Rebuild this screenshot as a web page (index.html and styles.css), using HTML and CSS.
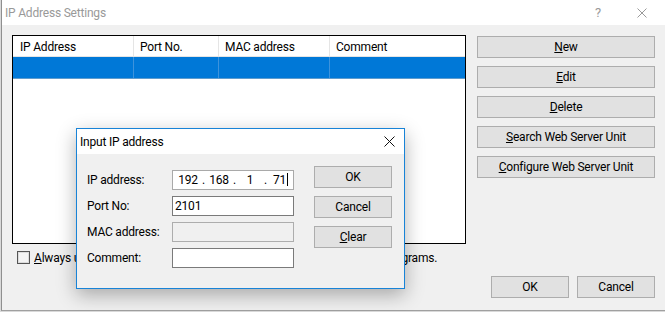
FILE: index.html
```html
<!DOCTYPE html>
<html lang="en">
<head>
    <meta charset="UTF-8">
    <meta name="viewport" content="width=device-width, initial-scale=1.0">
    <title>IP Address Settings</title>
    <link rel="stylesheet" href="styles.css">
</head>
<body>
    <div class="window">
        <div class="titlebar">
            <span class="title">IP Address Settings</span>
            <span class="help">?</span>
            <svg class="close" width="10" height="10" viewBox="0 0 10 10"><path d="M0.5 0.5 L9.5 9.5 M9.5 0.5 L0.5 9.5" stroke="#9a9a9a" stroke-width="1" fill="none"/></svg>
        </div>

        <div class="content">
            <div class="main">
                <div class="list">
                    <div class="list-row list-head">
                        <div class="col c1">IP Address</div>
                        <div class="col c2">Port No.</div>
                        <div class="col c3">MAC address</div>
                        <div class="col c4">Comment</div>
                    </div>
                    <div class="list-row selected">
                        <div class="col c1"></div>
                        <div class="col c2"></div>
                        <div class="col c3"></div>
                        <div class="col c4"></div>
                    </div>
                </div>
                <div class="side-buttons">
                    <button class="btn"><u>N</u>ew</button>
                    <button class="btn"><u>E</u>dit</button>
                    <button class="btn"><u>D</u>elete</button>
                    <button class="btn"><u>S</u>earch Web Server Unit</button>
                    <button class="btn"><u>C</u>onfigure Web Server Unit</button>
                </div>
            </div>

            <label class="check">
                <span class="check-box"></span>
                <span><u>A</u>lways use the selected IP address when connecting from the other programs.</span>
            </label>

            <div class="footer">
                <button class="btn wide">OK</button>
                <button class="btn wide">Cancel</button>
            </div>
        </div>

        <!-- modal on top of the settings window -->
        <div class="dialog">
            <div class="dialog-title">
                <span>Input IP address</span>
                <svg class="dialog-close" width="11" height="11" viewBox="0 0 11 11"><path d="M0.5 0.5 L10.5 10.5 M10.5 0.5 L0.5 10.5" stroke="#111" stroke-width="1" fill="none"/></svg>
            </div>
            <div class="dialog-body">
                <div class="form">
                    <span class="lbl">IP address:</span>
                    <div class="field ip">
                        <span class="oct">192</span><span class="dot">.</span>
                        <span class="oct">168</span><span class="dot">.</span>
                        <span class="oct">1</span><span class="dot">.</span>
                        <span class="oct last">71<span class="caret"></span></span>
                    </div>

                    <span class="lbl">Port No:</span>
                    <div class="field">2101</div>

                    <span class="lbl">MAC address:</span>
                    <div class="field disabled"></div>

                    <span class="lbl">Comment:</span>
                    <div class="field"></div>
                </div>
                <div class="dialog-buttons">
                    <button class="btn wide">OK</button>
                    <button class="btn wide">Cancel</button>
                    <button class="btn wide"><u>C</u>lear</button>
                </div>
            </div>
        </div>
    </div>
</body>
</html>
```

FILE: styles.css
```css
* {
    box-sizing: border-box;
}
body {
    margin: 0;
    background-color: #d9d9d9;
    font-family: Roboto, "Liberation Sans", Arial, sans-serif;
    font-size: 12px;
    letter-spacing: -0.2px;
    color: #000;
}
.window {
    position: relative;
    margin-left: 1px;
    width: 664px;
    height: 311px;
    border-left: 1px solid #8f8f8f;
    border-bottom: 1px solid #a0a0a0;
    background-color: #f0f0f0;
}
.titlebar {
    display: flex;
    align-items: center;
    height: 25px;
    padding-left: 3px;
    background: white;
    color: #999;
}
.title {
    flex: 1;
}
.help {
    font-size: 13px;
    color: #9a9a9a;
    margin-right: 36px;
}
.close {
    margin-right: 18px;
}
.content {
    padding: 10px 10px 0 10px;
}
.main {
    display: flex;
    gap: 11px;
}
.list {
    width: 454px;
    height: 209px;
    border: 1px solid #000;
    background: white;
}
.list-row {
    display: flex;
}
.list-head {
    height: 21px;
    border-bottom: 1px solid #e5e5e5;
}
.list-head .col {
    line-height: 20px;
    padding-top: 1px;
    border-right: 1px solid #e5e5e5;
}
.col {
    padding-left: 6px;
}
.c1 {
    width: 121px;
    padding-left: 7px;
}
.c2 {
    width: 85px;
}
.c3 {
    width: 111px;
}
.c4 {
    flex: 1;
}
.list-head .c4 {
    border-right: none;
}
.selected {
    height: 22px;
    background-color: #0078d7;
    border-bottom: 1px solid #5f9ccd;
}
.selected .col {
    border-right: 1px solid #3d93dc;
}
.selected .c4 {
    border-right: none;
}
.side-buttons {
    display: flex;
    flex-direction: column;
    gap: 8px;
    margin-top: 1px;
    width: 178px;
}
.btn {
    height: 22px;
    padding: 0;
    background-color: #e1e1e1;
    border: 1px solid #adadad;
    font-family: inherit;
    font-size: 12px;
    letter-spacing: -0.2px;
    color: #000;
}
.btn.wide {
    width: 78px;
}
.check {
    display: flex;
    align-items: center;
    gap: 4px;
    margin: 7px 0 0 5px;
    height: 13px;
}
.check-box {
    width: 13px;
    height: 13px;
    border: 1px solid #555;
    background: #f4f4f4;
    box-shadow: inset 0 0 0 1px #dcdcdc;
}
.footer {
    display: flex;
    justify-content: flex-end;
    gap: 8px;
    margin-top: 12px;
}
.dialog {
    position: absolute;
    left: 74px;
    top: 128px;
    width: 329px;
    height: 161px;
    border: 1px solid #1883d7;
    background-color: #f0f0f0;
    box-shadow: 0 6px 18px rgba(0, 0, 0, 0.3);
}
.dialog-title {
    display: flex;
    align-items: center;
    justify-content: space-between;
    height: 25px;
    padding: 0 9px 0 3px;
    background: white;
}
.dialog-body {
    display: flex;
    align-items: flex-start;
    gap: 20px;
    padding: 12px 0 0 10px;
}
.form {
    display: grid;
    grid-template-columns: 85px 122px;
    row-gap: 6px;
    margin-top: 4px;
    align-items: center;
}
.field {
    height: 20px;
    line-height: 18px;
    padding-left: 2px;
    border: 1px solid #7a7a7a;
    background: white;
}
.field.disabled {
    border-color: #adadad;
    background: #f0f0f0;
}
.field.ip {
    display: flex;
    padding-left: 4px;
    border-color: #a9a9a9;
}
.oct {
    width: 22px;
    text-align: center;
}
.dot {
    width: 9px;
    text-align: center;
}
.oct.last {
    text-align: left;
    padding-left: 3px;
    width: auto;
}
.caret {
    display: inline-block;
    width: 1px;
    height: 13px;
    margin-left: 1px;
    vertical-align: -2px;
    background: #000;
}
.dialog-buttons {
    display: flex;
    flex-direction: column;
    gap: 8px;
}
```
